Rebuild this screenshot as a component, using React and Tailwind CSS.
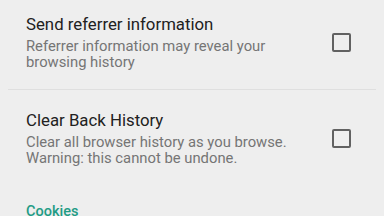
import React from 'react'

const items = [
  {
    title: 'Send referrer information',
    lines: ['Referrer information may reveal your', 'browsing history'],
  },
  {
    title: 'Clear Back History',
    lines: ['Clear all browser history as you browse.', 'Warning: this cannot be undone.'],
  },
]

const Checkbox = () => (
  <div className="w-[19px] h-[19px] shrink-0 rounded-[2px] border-2 border-[#616161]" />
)

const SettingRow = ({ title, lines }) => (
  <div className="flex items-center pl-[26px] pr-[33px] pt-[20px] pb-[19px]">
    <div className="flex-1">
      <div className="text-[16.8px] leading-[20px] text-[#212121]">{title}</div>
      <div className="mt-[4px] text-[14.8px] leading-[16px] text-[#757575]">
        {lines.map((l) => (
          <div key={l}>{l}</div>
        ))}
      </div>
    </div>
    <Checkbox />
  </div>
)

export default function App() {
  return (
    <div
      className="w-[384px] h-[216px] overflow-hidden bg-[#eeeeee]"
      style={{ fontFamily: 'Roboto, "Noto Sans", sans-serif' }}
    >
      <div className="-mt-[6px]">
        <SettingRow {...items[0]} />
        <div className="mx-[8px] h-px bg-[#dfdfdf]" />
        <SettingRow {...items[1]} />
        <div className="pl-[26px] pt-[17px] text-[14.5px] leading-[20px] font-medium text-[#1f9c85]">
          Cookies
        </div>
      </div>
    </div>
  )
}
